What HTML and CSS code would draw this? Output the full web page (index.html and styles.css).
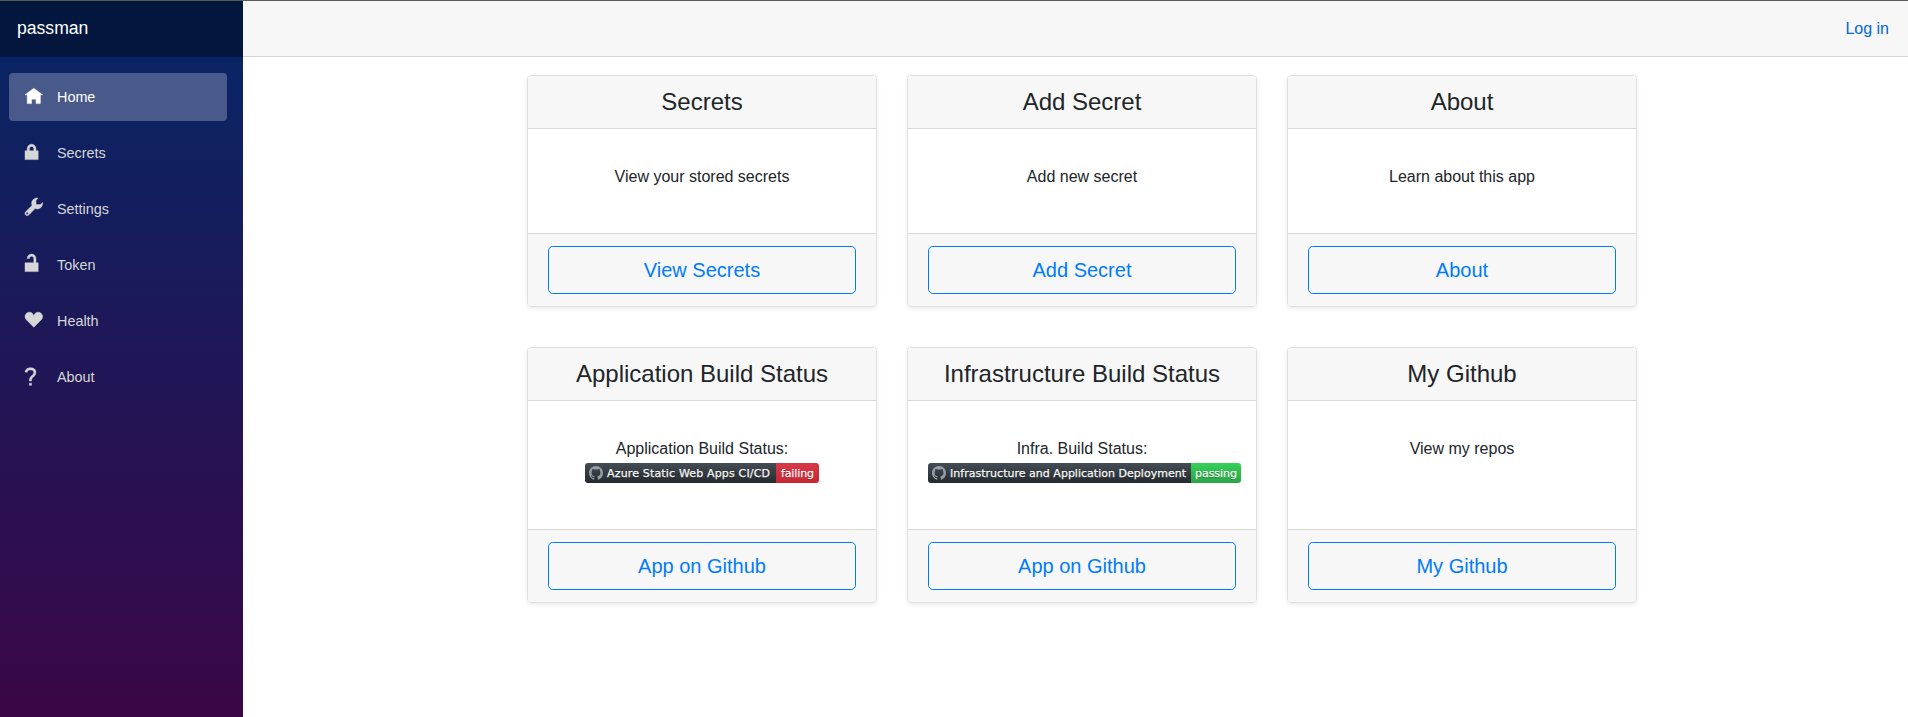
FILE: index.html
```html
<!DOCTYPE html>
<html lang="en">
<head>
<meta charset="utf-8">
<title>passman</title>
<link rel="stylesheet" href="styles.css">
</head>
<body>
<div class="app">
  <aside class="sidebar">
    <div class="brand">passman</div>
    <nav class="nav">
      <a class="nav-link active"><svg class="oi" viewBox="0 0 8 8"><path transform="translate(0 1)" d="M4 0l-4 3h1v4h2v-2h2v2h2v-4.03l1 .03-4-3z"/></svg>Home</a>
      <a class="nav-link"><svg class="oi" viewBox="0 0 8 8"><path transform="translate(0 1)" d="M3 0c-1.1 0-2 .9-2 2v1h-1v4h6v-4h-1v-1c0-1.1-.9-2-2-2zm0 1c.56 0 1 .44 1 1v1h-2v-1c0-.56.44-1 1-1z"/></svg>Secrets</a>
      <a class="nav-link"><svg class="oi" viewBox="0 0 8 8"><path d="M5.500 0c-1.380 0-2.500 1.120-2.500 2.500 0 .32.08.62.19.91l-2.910 2.880c-.39.39-.39 1.050 0 1.440.2.2.46.28.72.28.26 0 .52-.09.72-.28l2.880-2.910c.28.11.58.19.91.19 1.380 0 2.500-1.120 2.500-2.500 0-.16 0-.32-.03-.47l-.97.97h-2v-2l.97-.97c-.15-.03-.31-.03-.47-.03zm-4.500 6.500c.28 0 .5.22.5.5s-.22.5-.5.5-.5-.22-.5-.5.22-.5.5-.5z"/></svg>Settings</a>
      <a class="nav-link"><svg class="oi" viewBox="0 0 8 8"><path d="M3 0c-1.100 0-2 .9-2 2h1c0-.56.44-1 1-1s1 .44 1 1v2h-4v4h6v-4h-1v-2c0-1.100-.9-2-2-2z"/></svg>Token</a>
      <a class="nav-link"><svg class="oi" viewBox="0 0 8 8"><path d="M2 1c-.55 0-1.040.23-1.410.59-.36.36-.59.85-.59 1.410 0 .55.23 1.040.59 1.410l3.410 3.410 3.410-3.410c.36-.36.59-.85.59-1.410 0-.55-.23-1.040-.59-1.410-.36-.36-.85-.59-1.410-.59-.55 0-1.040.23-1.410.59-.36.36-.59.85-.59 1.410 0-.55-.23-1.040-.59-1.410-.36-.36-.85-.59-1.410-.59z"/></svg>Health</a>
      <a class="nav-link"><svg class="oi" viewBox="0 0 8 8"><path transform="translate(0 .8)" d="M2.470 0c-.85 0-1.480.26-1.880.66-.4.4-.54.9-.59 1.280l1 .13c.04-.25.12-.5.31-.69.19-.19.49-.38 1.160-.38.66 0 1.020.16 1.220.34.2.18.28.4.28.66 0 .83-.34 1.060-.84 1.500-.5.44-1.160 1.080-1.160 2.250v.25h1v-.25c0-.83.31-1.060.81-1.500.5-.44 1.190-1.080 1.190-2.250 0-.48-.17-1.020-.59-1.410-.43-.39-1.070-.59-1.910-.59zm-.5 7v1h1v-1h-1z"/></svg>About</a>
    </nav>
  </aside>
  <div class="main">
    <header class="top-row"><a class="login">Log in</a></header>
    <main class="deck">
      <section class="card">
        <h4 class="card-header">Secrets</h4>
        <div class="card-body"><p>View your stored secrets</p></div>
        <div class="card-footer"><a class="btn">View Secrets</a></div>
      </section>
      <section class="card">
        <h4 class="card-header">Add Secret</h4>
        <div class="card-body"><p>Add new secret</p></div>
        <div class="card-footer"><a class="btn">Add Secret</a></div>
      </section>
      <section class="card">
        <h4 class="card-header">About</h4>
        <div class="card-body"><p>Learn about this app</p></div>
        <div class="card-footer"><a class="btn">About</a></div>
      </section>
      <section class="card">
        <h4 class="card-header">Application Build Status</h4>
        <div class="card-body"><p>Application Build Status:</p>
          <svg class="badge" width="234" height="20" viewBox="0 0 234 20">
            <defs>
              <linearGradient id="dark" x2="0" y2="1"><stop offset="0" stop-color="#444d56"/><stop offset="1" stop-color="#24292e"/></linearGradient>
              <linearGradient id="red" x2="0" y2="1"><stop offset="0" stop-color="#d73a49"/><stop offset="1" stop-color="#cb2431"/></linearGradient>
              <linearGradient id="green" x2="0" y2="1"><stop offset="0" stop-color="#34d058"/><stop offset="1" stop-color="#28a745"/></linearGradient>
              <path id="octocat" fill="#959da5" d="M8 0C3.580 0 0 3.580 0 8c0 3.540 2.290 6.530 5.470 7.590.4.070.55-.17.55-.38 0-.19-.01-.82-.01-1.490-2.010.37-2.530-.49-2.690-.94-.09-.23-.48-.94-.82-1.130-.28-.15-.68-.52-.01-.53.63-.01 1.080.58 1.230.82.72 1.210 1.870.87 2.330.66.07-.52.28-.87.51-1.070-1.780-.2-3.640-.89-3.640-3.950 0-.87.31-1.590.82-2.150-.08-.2-.36-1.020.08-2.120 0 0 .67-.21 2.200.82.64-.18 1.320-.27 2-.27s1.360.09 2 .27c1.530-1.040 2.200-.82 2.200-.82.44 1.100.16 1.920.08 2.120.51.56.82 1.270.82 2.150 0 3.070-1.870 3.750-3.650 3.950.29.25.54.73.54 1.480 0 1.070-.01 1.930-.01 2.200 0 .21.15.46.55.38A8.010 8.010 0 0 0 16 8c0-4.420-3.580-8-8-8z"/>
            </defs>
            <path fill="url(#dark)" d="M3 0H191V20H3a3 3 0 0 1-3-3V3a3 3 0 0 1 3-3z"/>
            <path fill="url(#red)" d="M191 0h40a3 3 0 0 1 3 3v14a3 3 0 0 1-3 3h-40z"/>
            <use href="#octocat" transform="translate(4 3) scale(.875)"/>
            <g class="badge-text">
              <text x="22" y="14" textLength="163" lengthAdjust="spacing">Azure Static Web Apps CI/CD</text>
              <text x="196" y="14" textLength="33" lengthAdjust="spacing">failing</text>
            </g>
          </svg>
        </div>
        <div class="card-footer"><a class="btn">App on Github</a></div>
      </section>
      <section class="card">
        <h4 class="card-header">Infrastructure Build Status</h4>
        <div class="card-body"><p>Infra. Build Status:</p>
          <svg class="badge" width="313" height="20" viewBox="0 0 313 20">
            <path fill="url(#dark)" d="M3 0H263V20H3a3 3 0 0 1-3-3V3a3 3 0 0 1 3-3z"/>
            <path fill="url(#green)" d="M263 0h47a3 3 0 0 1 3 3v14a3 3 0 0 1-3 3h-47z"/>
            <use href="#octocat" transform="translate(4 3) scale(.875)"/>
            <g class="badge-text">
              <text x="22" y="14" textLength="236" lengthAdjust="spacing">Infrastructure and Application Deployment</text>
              <text x="267" y="14" textLength="42" lengthAdjust="spacing">passing</text>
            </g>
          </svg>
        </div>
        <div class="card-footer"><a class="btn">App on Github</a></div>
      </section>
      <section class="card">
        <h4 class="card-header">My Github</h4>
        <div class="card-body"><p>View my repos</p></div>
        <div class="card-footer"><a class="btn">My Github</a></div>
      </section>
    </main>
  </div>
</div>
</body>
</html>
```
FILE: styles.css
```css
* { box-sizing: border-box; }
body {
  margin: 0;
  font: 16px/24px "Liberation Sans", Arial, sans-serif;
  color: #212529;
  background: #fff;
}
.app {
  display: flex;
  height: 717px;
  border-top: 1px solid #5a5a5a;
}
.sidebar {
  width: 243px;
  flex: none;
  background: linear-gradient(180deg, rgb(5, 39, 103) 0%, #3a0647 100%);
}
.brand {
  height: 56px;
  padding-left: 17px;
  line-height: 55px;
  font-size: 17.6px;
  color: #fff;
  background: rgba(0, 0, 0, .4);
}
.nav {
  display: flex;
  flex-direction: column;
  gap: 8px;
  padding: 16px 16px 0 9px;
}
.nav-link {
  display: flex;
  align-items: center;
  height: 48px;
  padding-left: 16px;
  border-radius: 4px;
  font-size: 14.4px;
  color: #d7d7d7;
}
.nav-link.active {
  background: rgba(255, 255, 255, .25);
  color: #fff;
}
.oi {
  width: 17.6px;
  height: 17.6px;
  margin: 0 14.1px 4px .3px;
  fill: currentColor;
  stroke: currentColor;
  stroke-width: .2;
  overflow: visible;
}
.main { flex: 1; }
.top-row {
  display: flex;
  justify-content: flex-end;
  align-items: center;
  height: 56px;
  padding-right: 19px;
  background: #f7f7f7;
  border-bottom: 1px solid #d6d5d5;
}
.login { color: #0366d6; }
.deck {
  display: grid;
  grid-template-columns: repeat(3, 350px);
  grid-template-rows: 232px 256px;
  gap: 40px 30px;
  padding: 18px 0 0 284px;
}
.card {
  display: flex;
  flex-direction: column;
  border: 1px solid #dfdfdf;
  border-radius: 4px;
  text-align: center;
  box-shadow: 0 2px 4px rgba(0, 0, 0, .075);
}
.card-header {
  height: 53px;
  margin: 0;
  padding-top: 12px;
  font-size: 24px;
  line-height: 28.8px;
  font-weight: 400;
  background: #f7f7f7;
  border-bottom: 1px solid #d9d9d9;
  border-radius: 3px 3px 0 0;
}
.card-body {
  flex: 1;
  padding: 36px 20px 0;
}
.card-body p { margin: 0; }
.badge {
  display: block;
  margin: 2px auto 0;
}
.badge-text {
  font: 11px "DejaVu Sans", Verdana, sans-serif;
  fill: #fff;
  stroke: #fff;
  stroke-width: .25;
  text-shadow: 0 1px 0 rgba(1, 1, 1, .3);
}
.card-footer {
  height: 73px;
  padding: 12px 20px;
  background: #f7f7f7;
  border-top: 1px solid #d9d9d9;
  border-radius: 0 0 3px 3px;
}
.btn {
  display: block;
  height: 48px;
  border: 1px solid #007bff;
  border-radius: 4.8px;
  font-size: 20px;
  line-height: 46px;
  color: #007bff;
}
```
